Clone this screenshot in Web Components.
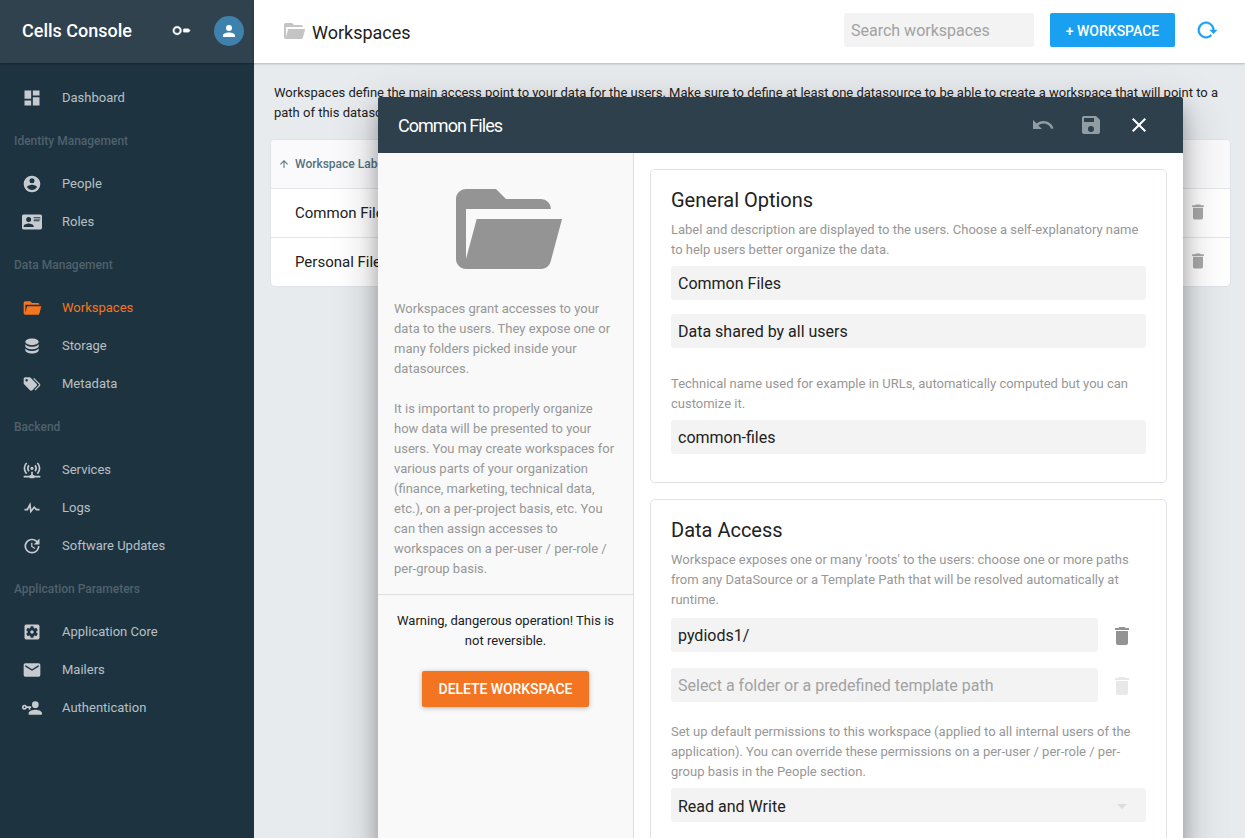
<!DOCTYPE html>
<html lang="en">
<head>
<meta charset="utf-8">
<title>Cells Console</title>
<style>
html,body{margin:0;height:100%;overflow:hidden}
body{font-family:Roboto,sans-serif;font-size:13px;color:#212121;background:#e8ebee}
</style>
</head>
<body>
<cells-app></cells-app>
<script>
const ICONS = {
  dashboard:'M13,3V9H21V3M13,21H21V11H13M3,21H11V15H3M3,13H11V3H3V13Z',
  people:'M12,19.2C9.5,19.2 7.29,17.92 6,16C6.03,14 10,12.9 12,12.9C14,12.9 17.97,14 18,16C16.71,17.92 14.5,19.2 12,19.2M12,5A3,3 0 0,1 15,8A3,3 0 0,1 12,11A3,3 0 0,1 9,8A3,3 0 0,1 12,5M12,2A10,10 0 0,0 2,12A10,10 0 0,0 12,22A10,10 0 0,0 22,12C22,6.47 17.5,2 12,2Z',
  card:'M2,3H22C23.05,3 24,3.95 24,5V19C24,20.05 23.05,21 22,21H2C0.95,21 0,20.05 0,19V5C0,3.95 0.95,3 2,3M14,6V7H22V6H14M14,8V9H21.5L22,9V8H14M14,10V11H21V10H14M8,13.91C6,13.91 2,15 2,17V18H14V17C14,15 10,13.91 8,13.91M8,6A3,3 0 0,0 5,9A3,3 0 0,0 8,12A3,3 0 0,0 11,9A3,3 0 0,0 8,6Z',
  folder:'M19,20H4C2.89,20 2,19.1 2,18V6C2,4.89 2.89,4 4,4H10L12,6H19A2,2 0 0,1 21,8H21L4,8V18L6.14,10H23.21L20.93,18.5C20.7,19.37 19.92,20 19,20Z',
  database:'M12,3C7.58,3 4,4.79 4,7C4,9.21 7.58,11 12,11C16.42,11 20,9.21 20,7C20,4.79 16.42,3 12,3M4,9V12C4,14.21 7.58,16 12,16C16.42,16 20,14.21 20,12V9C20,11.21 16.42,13 12,13C7.58,13 4,11.21 4,9M4,14V17C4,19.21 7.58,21 12,21C16.42,21 20,19.21 20,17V14C20,16.21 16.42,18 12,18C7.58,18 4,16.21 4,14Z',
  tags:'M5.5,9A1.5,1.5 0 0,0 7,7.5A1.5,1.5 0 0,0 5.5,6A1.5,1.5 0 0,0 4,7.5A1.5,1.5 0 0,0 5.5,9M17.41,11.58C17.77,11.94 18,12.44 18,13C18,13.55 17.78,14.05 17.41,14.41L12.41,19.41C12.05,19.77 11.55,20 11,20C10.45,20 9.95,19.78 9.58,19.41L2.59,12.42C2.22,12.05 2,11.55 2,11V6C2,4.89 2.89,4 4,4H9C9.55,4 10.05,4.22 10.41,4.58L17.41,11.58M13.54,5.71L14.54,4.71L21.41,11.58C21.78,11.94 22,12.45 22,13C22,13.55 21.78,14.05 21.42,14.41L16.04,19.79L15.04,18.79L20.75,13L13.54,5.71Z',
  network:'M4.93,2.93C3.12,4.74 2,7.24 2,10C2,12.76 3.12,15.26 4.93,17.07L6.34,15.66C4.89,14.22 4,12.22 4,10C4,7.79 4.89,5.78 6.34,4.34L4.93,2.93M19.07,2.93L17.66,4.34C19.11,5.78 20,7.79 20,10C20,12.22 19.11,14.22 17.66,15.66L19.07,17.07C20.88,15.26 22,12.76 22,10C22,7.24 20.88,4.74 19.07,2.93M7.76,5.76C6.67,6.85 6,8.35 6,10C6,11.65 6.67,13.15 7.76,14.24L9.17,12.83C8.45,12.11 8,11.11 8,10C8,8.89 8.45,7.89 9.17,7.17L7.76,5.76M16.24,5.76L14.83,7.17C15.55,7.89 16,8.89 16,10C16,11.11 15.55,12.11 14.83,12.83L16.24,14.24C17.33,13.15 18,11.65 18,10C18,8.35 17.33,6.85 16.24,5.76M12,8A2,2 0 0,0 10,10A2,2 0 0,0 12,12A2,2 0 0,0 14,10A2,2 0 0,0 12,8M11,14V18H10A1,1 0 0,0 9,19H2V21H9A1,1 0 0,0 10,22H14A1,1 0 0,0 15,21H22V19H15A1,1 0 0,0 14,18H13V14H11Z',
  pulse:'M3,13H5.79L10.1,4.79L11.28,13.75L14.5,9.66L17.83,13H21V15H17L14.67,12.67L9.92,18.73L8.94,11.31L7,15H3V13Z',
  update:'M21,10.12H14.22L16.96,7.3C14.23,4.6 9.81,4.5 7.08,7.2C4.35,9.91 4.35,14.28 7.08,17C9.81,19.7 14.23,19.7 16.96,17C18.32,15.65 19,14.08 19,12.1H21C21,14.08 20.12,16.65 18.36,18.39C14.85,21.87 9.15,21.87 5.64,18.39C2.14,14.92 2.11,9.28 5.62,5.81C9.13,2.34 14.76,2.34 18.27,5.81L21,3V10.12M12.5,8V12.25L16,14.33L15.28,15.54L11,13V8H12.5Z',
  settings:'M17.25,12C17.25,12.23 17.23,12.46 17.2,12.68L18.68,13.84C18.81,13.95 18.85,14.13 18.76,14.29L17.36,16.71C17.27,16.86 17.09,16.92 16.93,16.86L15.19,16.16C14.83,16.44 14.43,16.67 14,16.85L13.75,18.7C13.72,18.87 13.57,19 13.4,19H10.6C10.43,19 10.28,18.87 10.25,18.7L10,16.85C9.56,16.67 9.17,16.44 8.81,16.16L7.07,16.86C6.91,16.92 6.73,16.86 6.64,16.71L5.24,14.29C5.15,14.13 5.19,13.95 5.32,13.84L6.8,12.68C6.77,12.46 6.75,12.23 6.75,12C6.75,11.77 6.77,11.54 6.8,11.32L5.32,10.16C5.19,10.05 5.15,9.86 5.24,9.71L6.64,7.29C6.73,7.13 6.91,7.07 7.07,7.13L8.81,7.84C9.17,7.56 9.56,7.32 10,7.15L10.25,5.29C10.28,5.13 10.43,5 10.6,5H13.4C13.57,5 13.72,5.13 13.75,5.29L14,7.15C14.43,7.32 14.83,7.56 15.19,7.84L16.93,7.13C17.09,7.07 17.27,7.13 17.36,7.29L18.76,9.71C18.85,9.86 18.81,10.05 18.68,10.16L17.2,11.32C17.23,11.54 17.25,11.77 17.25,12M19,3H5C3.89,3 3,3.89 3,5V19A2,2 0 0,0 5,21H19A2,2 0 0,0 21,19V5C21,3.89 20.1,3 19,3M12,10C10.89,10 10,10.89 10,12A2,2 0 0,0 12,14A2,2 0 0,0 14,12A2,2 0 0,0 12,10Z',
  email:'M20,8L12,13L4,8V6L12,11L20,6M20,4H4C2.89,4 2,4.89 2,6V18A2,2 0 0,0 4,20H20A2,2 0 0,0 22,18V6C22,4.89 21.1,4 20,4Z',
  auth:'M11,10V12H10V14H8V12H5.83C5.42,13.17 4.31,14 3,14A3,3 0 0,1 0,11A3,3 0 0,1 3,8C4.31,8 5.42,8.83 5.83,10H11M3,10A1,1 0 0,0 2,11A1,1 0 0,0 3,12A1,1 0 0,0 4,11A1,1 0 0,0 3,10M16,14C18.67,14 24,15.34 24,18V20H8V18C8,15.34 13.33,14 16,14M16,12A4,4 0 0,1 12,8A4,4 0 0,1 16,4A4,4 0 0,1 20,8A4,4 0 0,1 16,12Z',
  account:'M12,4A4,4 0 0,1 16,8A4,4 0 0,1 12,12A4,4 0 0,1 8,8A4,4 0 0,1 12,4M12,14C16.42,14 20,15.79 20,18V20H4V18C4,15.79 7.58,14 12,14Z',
  trash:'M19,4H15.5L14.5,3H9.5L8.5,4H5V6H19M6,19A2,2 0 0,0 8,21H16A2,2 0 0,0 18,19V7H6V19Z',
  undo:'M12.5,8C9.85,8 7.45,9 5.6,10.6L2,7V16H11L7.38,12.38C8.77,11.22 10.54,10.5 12.5,10.5C16.04,10.5 19.08,12.81 20.15,16L22.52,15.22C21.13,11.03 17.15,8 12.5,8Z',
  save:'M15,9H5V5H15M12,19A3,3 0 0,1 9,16A3,3 0 0,1 12,13A3,3 0 0,1 15,16A3,3 0 0,1 12,19M17,3H5C3.89,3 3,3.9 3,5V19A2,2 0 0,0 5,21H19A2,2 0 0,0 21,19V7L17,3Z',
  close:'M19,6.41L17.59,5L12,10.59L6.41,5L5,6.41L10.59,12L5,17.59L6.41,19L12,13.41L17.59,19L19,17.59L13.41,12L19,6.41Z',
  up:'M13,20H11V8L5.5,13.5L4.08,12.08L12,4.16L19.92,12.08L18.5,13.5L13,8V20Z',
  caret:'M7,10L12,15L17,10H7Z',
  key:'M7,7A5,5 0 0,0 2,12A5,5 0 0,0 7,17A5,5 0 0,0 12,12A5,5 0 0,0 7,7M7,9A3,3 0 0,1 10,12A3,3 0 0,1 7,15A3,3 0 0,1 4,12A3,3 0 0,1 7,9M15,10A1,1 0 0,0 14,11V13A1,1 0 0,0 15,14H20L22,12L20,10Z',
  reload:'M2 12C2 16.97 6.03 21 11 21C13.39 21 15.68 20.06 17.4 18.4L15.9 16.9C14.63 18.25 12.86 19 11 19C4.76 19 1.64 11.46 6.05 7.05C10.46 2.64 18 5.77 18 12H15L19 16H19.1L23 12H20C20 7.03 15.97 3 11 3C6.03 3 2 7.03 2 12Z'
};

function define(name, css, html) {
  const t = document.createElement('template');
  customElements.define(name, class extends HTMLElement {
    connectedCallback() {
      if (this.shadowRoot) return;
      const a = k => this.getAttribute(k) || '';
      t.innerHTML = '<style>*{box-sizing:border-box}' + css + '</style>' + (typeof html === 'function' ? html(a) : html);
      this.attachShadow({ mode: 'open' }).append(t.content.cloneNode(true));
    }
  });
}

define('c-icon', `:host{display:block;flex:none;width:var(--s,20px);height:var(--s,20px)}svg{display:block;width:100%;height:100%;overflow:visible}path{stroke:currentColor;stroke-width:var(--w,0)}`,
  a => `<svg viewBox="0 0 24 24" fill="currentColor"><path d="${ICONS[a('name')]}"/></svg>`);

define('nav-item', `:host{display:flex;align-items:center;height:38px;padding-left:22px;gap:20px;color:#b8c0c4;font-size:13px}
:host([active]){color:#f4761f}c-icon{color:#c6cbd0;margin-top:1px}:host([active]) c-icon{color:inherit}`,
  a => `<c-icon name="${a('icon')}"></c-icon><slot></slot>`);

define('nav-group', `:host{display:block}h3{margin:0;height:48px;padding:2px 0 0 14px;line-height:46px;font-size:12px;font-weight:500;color:#4f616c}`,
  a => `<h3>${a('label')}</h3><slot></slot>`);

define('side-bar', `:host{display:flex;flex-direction:column;width:254px;flex:none;background:#1e3340}
header{height:63px;flex:none;background:#2f424d;display:flex;align-items:center;padding:0 10px 2px 22px;color:#fff;box-shadow:0 1px 2px rgba(0,0,0,.3)}
b{flex:1;font-size:18px;font-weight:500}
.key{--s:21px;--w:.4;margin-right:22px}
.av{width:30px;height:30px;margin-top:1px;border-radius:50%;background:#3e81ad;display:grid;place-items:center;--s:18px}
nav{padding-top:15px}`,
`<header><b>Cells Console</b><c-icon class="key" name="key"></c-icon><div class="av"><c-icon name="account"></c-icon></div></header>
<nav><nav-item icon="dashboard">Dashboard</nav-item>
<nav-group label="Identity Management"><nav-item icon="people">People</nav-item><nav-item icon="card">Roles</nav-item></nav-group>
<nav-group label="Data Management"><nav-item icon="folder" active>Workspaces</nav-item><nav-item icon="database">Storage</nav-item><nav-item icon="tags">Metadata</nav-item></nav-group>
<nav-group label="Backend"><nav-item icon="network">Services</nav-item><nav-item icon="pulse">Logs</nav-item><nav-item icon="update">Software Updates</nav-item></nav-group>
<nav-group label="Application Parameters"><nav-item icon="settings">Application Core</nav-item><nav-item icon="email">Mailers</nav-item><nav-item icon="auth">Authentication</nav-item></nav-group></nav>`);

define('text-field', `:host{display:flex;align-items:center;height:34px;padding:0 7px;border-radius:3px;background:#f3f3f3;font-size:16px;color:#212121;white-space:nowrap}
:host([hint]){color:#a2a2a2}:host([select]){padding-top:2px}c-icon{--s:24px;color:#dcdcdc;margin-right:5px}.t{flex:1}`,
  a => `<span class="t"><slot></slot></span>${a('select') ? '<c-icon name="caret"></c-icon>' : ''}`);

define('c-button', `:host{display:flex;align-items:center;justify-content:center;border-radius:2px;color:#fff;font-size:14px;font-weight:500;white-space:nowrap}`, `<slot></slot>`);

define('top-bar', `:host{display:flex;align-items:center;height:63px;flex:none;background:#fff;padding:0 27px 0 28px;box-shadow:0 1px 2px rgba(0,0,0,.22);position:relative}
c-icon{--s:24px;color:#c4c4c4;margin-right:6px}.f{margin-top:-1px}h1{margin:0;flex:1;font-size:18px;font-weight:400;padding-top:2px}
text-field{width:190px;margin:-3px 16px 0 0}c-button{width:125px;height:34px;background:#1aa0f0;margin:-3px 21px 0 0;padding-top:2px}
.r{color:#1aa0f0;--s:22px;--w:.5;margin:-3px 0 0}`,
`<c-icon class="f" name="folder"></c-icon><h1>Workspaces</h1><text-field hint>Search workspaces</text-field><c-button>+ WORKSPACE</c-button><c-icon class="r" name="reload"></c-icon>`);

define('ws-row', `:host{display:flex;align-items:center;height:49px;border-top:1px solid #e3e6ea;padding:0 22px 0 24px;font-size:15px}
span{flex:1}c-icon{color:#a9a9a9;margin-top:-2px}`, `<span><slot></slot></span><c-icon name="trash"></c-icon>`);

define('ws-table', `:host{display:block;background:#fff;border:1px solid #dfe3e7;border-radius:5px;overflow:hidden}
header{display:flex;align-items:center;height:48px;background:#fafafc;padding-left:7px;gap:5px;color:#547283;font-size:12px;font-weight:500;--s:12px}`,
`<header><c-icon name="up"></c-icon>Workspace Label</header><ws-row>Common Files</ws-row><ws-row>Personal Files</ws-row>`);

define('c-card', `:host{display:block;flex:none;border:1px solid #dfe3e7;border-radius:5px;padding:17px 20px 28px;background:#fff}h2{margin:0 0 6px;font-size:20px;font-weight:400;line-height:27px}`,
  a => `<h2>${a('heading')}</h2><slot></slot>`);

define('c-legend', `:host{display:block;line-height:20px;color:#979797;font-size:13px}`, `<slot></slot>`);

define('path-row', `:host{display:flex;align-items:center;gap:12px;height:34px}text-field{flex:1}c-icon{--s:24px;color:#939393;margin:2px 12px 0 0}:host([hint]) c-icon{color:#e8e8e8}`,
  a => `<text-field ${a('empty') ? 'hint' : ''}><slot></slot></text-field><c-icon name="trash"></c-icon>`);

define('ws-editor', `:host{display:flex;flex-direction:column;width:805px;background:#fff;border-radius:2px 2px 0 0;overflow:hidden;box-shadow:0 14px 45px rgba(0,0,0,.25),0 10px 18px rgba(0,0,0,.22)}
header{display:flex;align-items:center;height:56px;flex:none;background:#2e404b;color:#fff;padding:0 32px 0 20px;--s:24px}
header b{flex:1;font-size:18px;font-weight:400;letter-spacing:-.98px}header .d{color:#929da3;margin-right:24px}
main{display:flex;flex:1;min-height:0}
aside{width:256px;flex:none;background:#f9f9f9;border-right:1px solid #dcdfe2}
.pic{height:146px;display:grid;justify-content:center;padding-top:16px;--s:120px;color:#949494}
.help{padding:0 16px 15px;border-bottom:1px solid #dcdfe2}.help c-legend+c-legend{margin-top:20px}
.warn{padding:16px;text-align:center;line-height:20px;display:flex;flex-direction:column;align-items:center;gap:20px}
.warn c-button{width:167px;height:36px;letter-spacing:-.06px;background:#f37521;box-shadow:0 1px 5px rgba(0,0,0,.28)}
section{flex:1;padding:16px;display:flex;flex-direction:column;gap:16px}
.a{margin-top:6px}.b{margin-top:14px}.c{margin-top:26px}.p{margin-top:8px}.q{margin-top:16px}.e{margin-top:20px}`,
`<header><b>Common Files</b><c-icon class="d" name="undo"></c-icon><c-icon class="d" name="save"></c-icon><c-icon name="close"></c-icon></header>
<main><aside><div class="pic"><c-icon name="folder"></c-icon></div>
<div class="help"><c-legend>Workspaces grant accesses to your data to the users. They expose one or many folders picked inside your datasources.</c-legend><c-legend>It is important to properly organize how data will be presented to your users. You may create workspaces for various parts of your organization (finance, marketing, technical data, etc.), on a per-project basis, etc. You can then assign accesses to workspaces on a per-user / per-role / per-group basis.</c-legend></div>
<div class="warn"><span>Warning, dangerous operation! This is not reversible.</span><c-button>DELETE WORKSPACE</c-button></div></aside>
<section><c-card heading="General Options"><c-legend>Label and description are displayed to the users. Choose a self-explanatory name to help users better organize the data.</c-legend>
<text-field class="a">Common Files</text-field><text-field class="b">Data shared by all users</text-field>
<c-legend class="c">Technical name used for example in URLs, automatically computed but you can customize it.</c-legend><text-field class="a">common-files</text-field></c-card>
<c-card heading="Data Access"><c-legend>Workspace exposes one or many 'roots' to the users: choose one or more paths from any DataSource or a Template Path that will be resolved automatically at runtime.</c-legend>
<path-row class="p">pydiods1/</path-row><path-row class="q" hint empty="1">Select a folder or a predefined template path</path-row>
<c-legend class="e">Set up default permissions to this workspace (applied to all internal users of the application). You can override these permissions on a per-user / per-role / per-group basis in the People section.</c-legend>
<text-field class="a" select="1">Read and Write</text-field></c-card></section></main>`);

define('cells-app', `:host{display:flex;height:100vh;position:relative;overflow:hidden}
.m{flex:1;min-width:0;display:flex;flex-direction:column}p{margin:0;padding:20px 20px 16px;line-height:20px}
ws-table{margin:0 14px 0 16px}ws-editor{position:absolute;left:378px;top:97px;height:760px}`,
`<side-bar></side-bar><div class="m"><top-bar></top-bar><p>Workspaces define the main access point to your data for the users. Make sure to define at least one datasource to be able to create a workspace that will point to a path of this datasource.</p><ws-table></ws-table></div><ws-editor></ws-editor>`);
</script>
</body>
</html>
